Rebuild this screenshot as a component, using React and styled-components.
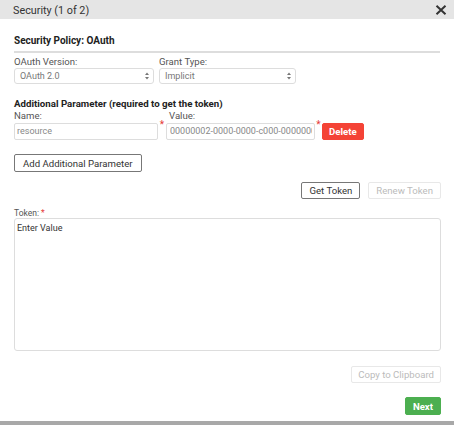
import React from "react";
import styled, { createGlobalStyle, css } from "styled-components";

const Global = createGlobalStyle`
  html, body { margin: 0; padding: 0; background: #fff; }
  body { font-family: Roboto, "Liberation Sans", Arial, sans-serif; }
  * { box-sizing: border-box; }
`;

const Frame = styled.div`
  width: 454px;
  height: 425px;
  display: flex;
  flex-direction: column;
  background: #fff;
  overflow: hidden;
`;

const Header = styled.header`
  height: 19px;
  flex-shrink: 0;
  background: #e5e5e5;
  display: flex;
  align-items: center;
  justify-content: space-between;
  padding: 0 7px 0 13px;
`;

const Title = styled.div`
  font-size: 10.8px;
  line-height: 16px;
  padding-top: 3px;
  color: #333;
`;

const CloseIcon = styled.svg`
  display: block;
  margin-top: 1px;
`;

const Body = styled.main`
  flex: 1;
  display: flex;
  flex-direction: column;
  padding: 16px 13px 0 14px;
`;

const SectionTitle = styled.div`
  font-size: 10px;
  font-weight: 700;
  line-height: 12px;
  color: #222;
  padding-bottom: 4px;
  border-bottom: 2px solid #ddd;
  margin-right: 1px;
`;

const FieldsGrid = styled.div`
  display: grid;
  grid-template-columns: 140px 137px;
  column-gap: 5px;
  margin-top: 3px;
`;

const Field = styled.div`
  display: flex;
  flex-direction: column;
`;

const Label = styled.label`
  font-size: 9.6px;
  line-height: 12px;
  color: #555;
  padding-left: ${(p) => p.$indent || 0}px;
`;

const SelectBox = styled.div`
  height: 16px;
  border: 1px solid #ddd;
  border-radius: 3px;
  padding: 0 4px 0 5px;
  display: flex;
  align-items: center;
  justify-content: space-between;
  font-size: 9px;
  color: #777;
  background: #fff;
`;

const Heading = styled.div`
  margin-top: 13.5px;
  font-size: 9.7px;
  font-weight: 700;
  line-height: 12px;
  color: #222;
`;

const ParamGrid = styled.div`
  display: grid;
  grid-template-columns: 144px 8px 149px 7px auto;
  grid-template-rows: 12px 17px;
  row-gap: 1px;
  justify-content: start;
`;

const Star = styled.span`
  color: #e53935;
  font-size: 10px;
  line-height: 10px;
  margin-top: -3px;
  text-align: center;
  grid-column: ${(p) => p.$col};
  grid-row: 2;
`;

const TextInput = styled.input`
  height: 17px;
  width: 100%;
  border: 1px solid #ddd;
  border-radius: 2px;
  padding: 0 2px 0 ${(p) => p.$pad || 2}px;
  font-family: inherit;
  font-size: 9px;
  color: #888;
  background: #fff;
  outline: none;
`;

const Button = styled.button`
  font-family: inherit;
  font-size: 9.6px;
  height: ${(p) => p.$h || 17}px;
  padding: 0 ${(p) => p.$px ?? 7}px;
  border-radius: 2px;
  background: #fff;
  border: 1px solid #777;
  color: #333;
  cursor: pointer;
  white-space: nowrap;
  ${(p) =>
    p.$variant === "disabled" &&
    css`
      border-color: #e8e8e8;
      color: #bbb;
      cursor: default;
    `}
  ${(p) =>
    p.$variant === "danger" &&
    css`
      background: #f44336;
      border-color: #f44336;
      color: #fff;
      font-weight: 700;
    `}
  ${(p) =>
    p.$variant === "success" &&
    css`
      background: #4caf50;
      border-color: #4caf50;
      color: #fff;
      font-weight: 700;
    `}
`;

const DeleteCell = styled.div`
  grid-column: 5;
  grid-row: 2;
  display: flex;
`;

const AddRow = styled.div`
  margin-top: 14.5px;
  display: flex;
`;

const ActionRow = styled.div`
  display: flex;
  justify-content: flex-end;
  gap: 8px;
  margin-top: ${(p) => p.$mt || 0}px;
`;

const TokenLabel = styled.label`
  margin-top: 9px;
  font-size: 8.5px;
  line-height: 10px;
  color: #555;
`;

const TokenStar = styled.span`
  color: #e53935;
  margin-left: 2px;
`;

const TokenArea = styled.textarea`
  height: 133px;
  width: 100%;
  border: 1px solid #ddd;
  border-radius: 3px;
  padding: 4px 2px;
  font-family: inherit;
  font-size: 9px;
  line-height: 11px;
  color: #333;
  resize: none;
  outline: none;
  &::placeholder {
    color: #333;
    opacity: 1;
  }
`;

const BottomBar = styled.div`
  height: 4px;
  flex-shrink: 0;
  background: #a8a8a8;
`;

const Updown = () => (
  <svg width="4" height="8" viewBox="0 0 4 8">
    <path d="M0 3 L2 0.6 L4 3 Z M0 5 L2 7.4 L4 5 Z" fill="#777" />
  </svg>
);

export default function App() {
  return (
    <>
      <Global />
      <Frame>
        <Header>
          <Title>Security (1 of 2)</Title>
          <CloseIcon width="12" height="10" viewBox="0 0 12 10">
            <path d="M1.5 0.8 L10.5 9.2 M10.5 0.8 L1.5 9.2" stroke="#333" strokeWidth="2" />
          </CloseIcon>
        </Header>
        <Body>
          <SectionTitle>Security Policy: OAuth</SectionTitle>
          <FieldsGrid>
            <Field>
              <Label>OAuth Version:</Label>
              <SelectBox>
                <span>OAuth 2.0</span>
                <Updown />
              </SelectBox>
            </Field>
            <Field>
              <Label>Grant Type:</Label>
              <SelectBox>
                <span>Implicit</span>
                <Updown />
              </SelectBox>
            </Field>
          </FieldsGrid>

          <Heading>Additional Parameter (required to get the token)</Heading>
          <ParamGrid>
            <Label style={{ gridColumn: 1, gridRow: 1 }}>Name:</Label>
            <Label $indent={3} style={{ gridColumn: 3, gridRow: 1 }}>Value:</Label>
            <TextInput readOnly value="resource" style={{ gridColumn: 1, gridRow: 2 }} />
            <Star $col={2}>*</Star>
            <TextInput
              readOnly
              $pad={3}
              value="00000002-0000-0000-c000-000000000000"
              style={{ gridColumn: 3, gridRow: 2 }}
            />
            <Star $col={4}>*</Star>
            <DeleteCell>
              <Button $variant="danger" $px={6}>Delete</Button>
            </DeleteCell>
          </ParamGrid>

          <AddRow>
            <Button $h={18} $px={8}>Add Additional Parameter</Button>
          </AddRow>

          <ActionRow $mt={10}>
            <Button $px={7}>Get Token</Button>
            <Button $variant="disabled" $px={7}>Renew Token</Button>
          </ActionRow>

          <TokenLabel>
            Token:<TokenStar>*</TokenStar>
          </TokenLabel>
          <TokenArea placeholder="Enter Value" />

          <ActionRow $mt={15}>
            <Button $variant="disabled" $px={6}>Copy to Clipboard</Button>
          </ActionRow>
          <ActionRow $mt={14}>
            <Button $variant="success" $h={18} $px={7}>Next</Button>
          </ActionRow>
        </Body>
        <BottomBar />
      </Frame>
    </>
  );
}
